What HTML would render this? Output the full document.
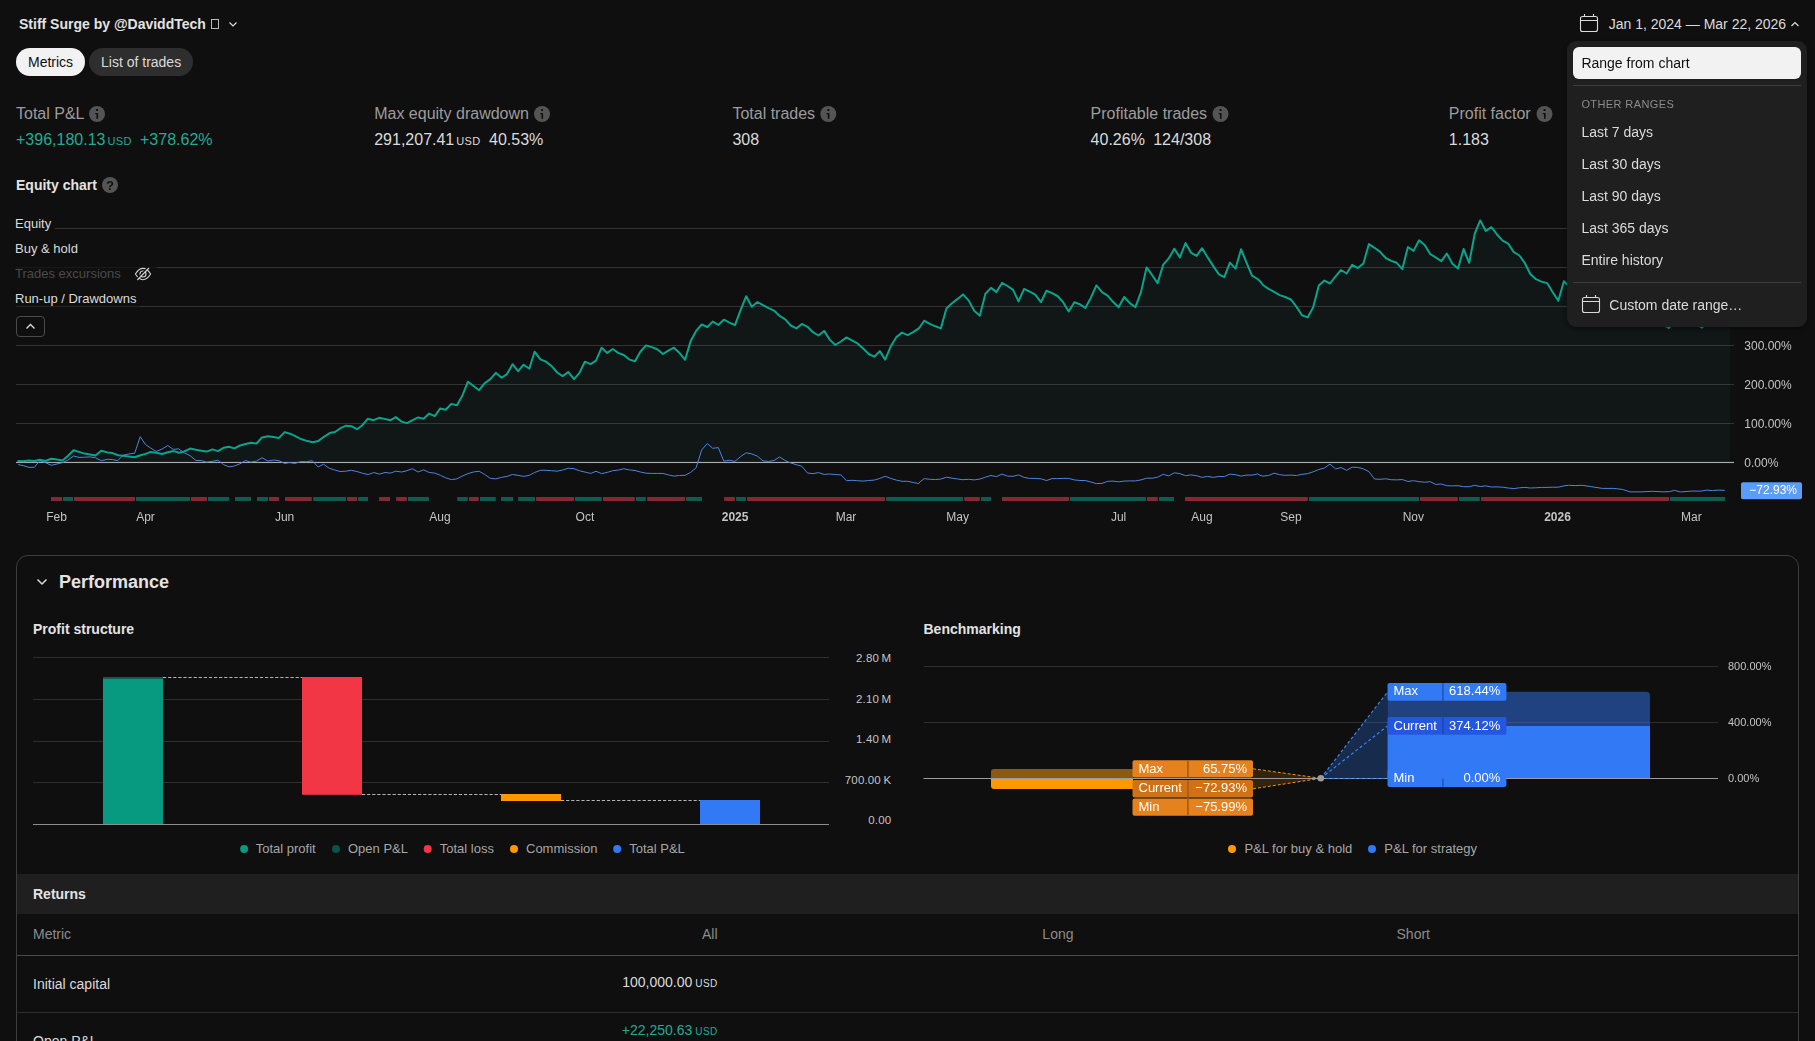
<!DOCTYPE html><html><head><meta charset="utf-8"><title>Strategy report</title><style>
html,body{margin:0;padding:0;background:#0f0f0f;}
body{width:1815px;height:1041px;position:relative;overflow:hidden;font-family:"Liberation Sans", sans-serif;color:#dbdbdb;}
.t{position:absolute;white-space:pre;line-height:normal;}
.abs{position:absolute;}
svg{position:absolute;left:0;top:0;overflow:visible}
.usd{font-size:11px;margin-left:2px;letter-spacing:0.35px}
.lay{position:absolute;left:0;top:0;width:1815px;height:1041px;}
.grayc{will-change:transform;}
</style></head><body>
<div class="lay "><div class="abs" style="left:211px;top:19px;width:6px;height:8px;border:1px solid #bdbdbd"></div><div class="abs" style="left:16px;top:48px;width:69px;height:28px;border-radius:14px;background:#f2f2f2"></div><div class="abs" style="left:89px;top:48px;width:104px;height:28px;border-radius:14px;background:#2e2e2e"></div><div class="abs" style="left:16px;top:555px;width:1781px;height:520px;border:1px solid #3d3d3d;border-radius:12px;box-sizing:content-box"></div><div class="abs" style="left:17px;top:873.5px;width:1781px;height:40px;background:#1f1f1f"></div><div class="abs" style="left:17px;top:955px;width:1781px;height:1px;background:#4a4a4a"></div><div class="abs" style="left:17px;top:1012px;width:1781px;height:1px;background:#2e2e2e"></div><svg width="1815" height="1041" viewBox="0 0 1815 1041" font-family='"Liberation Sans", sans-serif'><g><circle cx="97" cy="114" r="8" fill="#545454"/><rect x="96" y="108.9" width="2.1" height="2" rx="0.6" fill="#0f0f0f"/><rect x="96.45" y="113.1" width="1.65" height="5.7" fill="#0f0f0f"/><rect x="95.1" y="113.1" width="1.6" height="1" fill="#0f0f0f"/></g><g><circle cx="542" cy="114" r="8" fill="#545454"/><rect x="541" y="108.9" width="2.1" height="2" rx="0.6" fill="#0f0f0f"/><rect x="541.45" y="113.1" width="1.65" height="5.7" fill="#0f0f0f"/><rect x="540.1" y="113.1" width="1.6" height="1" fill="#0f0f0f"/></g><g><circle cx="828.3" cy="114" r="8" fill="#545454"/><rect x="827.3" y="108.9" width="2.1" height="2" rx="0.6" fill="#0f0f0f"/><rect x="827.75" y="113.1" width="1.65" height="5.7" fill="#0f0f0f"/><rect x="826.4" y="113.1" width="1.6" height="1" fill="#0f0f0f"/></g><g><circle cx="1220.5" cy="114" r="8" fill="#545454"/><rect x="1219.5" y="108.9" width="2.1" height="2" rx="0.6" fill="#0f0f0f"/><rect x="1219.95" y="113.1" width="1.65" height="5.7" fill="#0f0f0f"/><rect x="1218.6" y="113.1" width="1.6" height="1" fill="#0f0f0f"/></g><g><circle cx="1544.5" cy="114" r="8" fill="#545454"/><rect x="1543.5" y="108.9" width="2.1" height="2" rx="0.6" fill="#0f0f0f"/><rect x="1543.95" y="113.1" width="1.65" height="5.7" fill="#0f0f0f"/><rect x="1542.6" y="113.1" width="1.6" height="1" fill="#0f0f0f"/></g><g><circle cx="110" cy="185" r="8" fill="#545454"/></g><path d="M229.5 22.5 L233 26 L236.5 22.5" fill="none" stroke="#dbdbdb" stroke-width="1.2"/><path d="M1791.5 26 L1795 22.5 L1798.5 26" fill="none" stroke="#dbdbdb" stroke-width="1.2"/><g fill="none" stroke="#dbdbdb" stroke-width="1.1"><rect x="1580.5" y="16.5" width="17" height="15" rx="2"/><path d="M1580.5 20.5H1597.5M1584.5 14V16.5M1593.5 14V16.5"/></g><rect x="16" y="267" width="141" height="1" fill="#191919"/><rect x="16" y="306" width="124" height="1" fill="#222222"/><rect x="16.5" y="316.5" width="28" height="20" rx="3.5" fill="#0f0f0f" stroke="#4a4a4a"/><path d="M26.5 328.5 L30.5 324.5 L34.5 328.5" fill="none" stroke="#dbdbdb" stroke-width="1.3"/><g fill="none" stroke="#cfcfcf" stroke-width="1.15"><path d="M135.4 274 C138 269.8 140.5 268.3 143 268.3 C145.5 268.3 148 269.8 150.6 274 C148 278.2 145.5 279.7 143 279.7 C140.5 279.7 138 278.2 135.4 274Z"/><circle cx="143" cy="274" r="3"/><path d="M136.4 279.3 L148.2 267.3" stroke="#0f0f0f" stroke-width="1.3"/><path d="M137.3 280 L149 268"/></g><path d="M37.5 579.5 L42 584 L46.5 579.5" fill="none" stroke="#dbdbdb" stroke-width="1.5"/><rect x="33" y="657" width="796" height="1" fill="#2e2e2e"/><rect x="33" y="699" width="796" height="1" fill="#2e2e2e"/><rect x="33" y="741" width="796" height="1" fill="#2e2e2e"/><rect x="33" y="782" width="796" height="1" fill="#2e2e2e"/><rect x="33" y="824" width="796" height="1" fill="#8c8c8c"/><rect x="103" y="677" width="60" height="147" fill="#089981"/><rect x="103" y="677" width="60" height="2" fill="#0d5e4f"/><rect x="302" y="677" width="60" height="117.8" fill="#f23645"/><rect x="501" y="794" width="60" height="7" fill="#ff9800"/><rect x="700" y="800" width="60" height="24" fill="#3179f5"/><path d="M163 677.5H302" stroke="#b4b4b4" stroke-width="1" stroke-dasharray="3.2 1.9"/><path d="M362 794.5H501" stroke="#b4b4b4" stroke-width="1" stroke-dasharray="3.2 1.9"/><path d="M561 800.5H700" stroke="#b4b4b4" stroke-width="1" stroke-dasharray="3.2 1.9"/><circle cx="244.1" cy="849" r="4" fill="#089981"/><circle cx="336" cy="849" r="4" fill="#0a5347"/><circle cx="427.7" cy="849" r="4" fill="#f23645"/><circle cx="514" cy="849" r="4" fill="#ff9800"/><circle cx="617.2" cy="849" r="4" fill="#3179f5"/><circle cx="1232" cy="849" r="4" fill="#ff9800"/><circle cx="1372" cy="849" r="4" fill="#3179f5"/></svg><div class="t" style="left:19px;top:16px;font-size:14px;color:#e3e3e3;font-weight:700;">Stiff Surge by @DaviddTech</div><div class="t" style="left:28px;top:54px;font-size:14px;color:#0f0f0f;font-weight:400;">Metrics</div><div class="t" style="left:101px;top:54px;font-size:14px;color:#dbdbdb;font-weight:400;">List of trades</div><div class="t" style="left:1608.7px;top:16px;font-size:14px;color:#dbdbdb;font-weight:400;">Jan 1, 2024 — Mar 22, 2026</div><div class="t" style="left:16px;top:105px;font-size:16px;color:#9c9c9c;font-weight:400;">Total P&amp;L</div><div class="t" style="left:374.2px;top:105px;font-size:16px;color:#9c9c9c;font-weight:400;">Max equity drawdown</div><div class="t" style="left:732.4px;top:105px;font-size:16px;color:#9c9c9c;font-weight:400;">Total trades</div><div class="t" style="left:1090.6px;top:105px;font-size:16px;color:#9c9c9c;font-weight:400;">Profitable trades</div><div class="t" style="left:1448.8px;top:105px;font-size:16px;color:#9c9c9c;font-weight:400;">Profit factor</div><div class="t" style="left:16px;top:131px;font-size:16px;color:#22ab94;font-weight:400;">+396,180.13<span class="usd">USD</span></div><div class="t" style="left:140px;top:131px;font-size:16px;color:#22ab94;font-weight:400;">+378.62%</div><div class="t" style="left:374.2px;top:131px;font-size:16px;color:#dbdbdb;font-weight:400;">291,207.41<span class="usd">USD</span></div><div class="t" style="left:489px;top:131px;font-size:16px;color:#dbdbdb;font-weight:400;">40.53%</div><div class="t" style="left:732.4px;top:131px;font-size:16px;color:#dbdbdb;font-weight:400;">308</div><div class="t" style="left:1090.6px;top:131px;font-size:16px;color:#dbdbdb;font-weight:400;">40.26%</div><div class="t" style="left:1153.2px;top:131px;font-size:16px;color:#dbdbdb;font-weight:400;">124/308</div><div class="t" style="left:1448.8px;top:131px;font-size:16px;color:#dbdbdb;font-weight:400;">1.183</div><div class="t" style="left:16px;top:177px;font-size:14px;color:#e3e3e3;font-weight:700;">Equity chart</div><div class="t" style="left:15px;top:216px;font-size:13px;color:#dbdbdb;font-weight:400;">Equity</div><div class="t" style="left:15px;top:241px;font-size:13px;color:#dbdbdb;font-weight:400;">Buy &amp; hold</div><div class="t" style="left:15px;top:266px;font-size:13px;color:#4a4a4a;font-weight:400;">Trades excursions</div><div class="t" style="left:15px;top:291px;font-size:13px;color:#dbdbdb;font-weight:400;">Run-up / Drawdowns</div><div class="t" style="right:923.7px;top:652px;font-size:11.5px;color:#c4c4c4;font-weight:400;letter-spacing:0.15px;">2.80<span style="margin-left:2.6px">M</span></div><div class="t" style="right:923.7px;top:693px;font-size:11.5px;color:#c4c4c4;font-weight:400;letter-spacing:0.15px;">2.10<span style="margin-left:2.6px">M</span></div><div class="t" style="right:923.7px;top:733px;font-size:11.5px;color:#c4c4c4;font-weight:400;letter-spacing:0.15px;">1.40<span style="margin-left:2.6px">M</span></div><div class="t" style="right:923.7px;top:774px;font-size:11.5px;color:#c4c4c4;font-weight:400;letter-spacing:0.15px;">700.00<span style="margin-left:2.6px">K</span></div><div class="t" style="right:923.7px;top:814px;font-size:11.5px;color:#c4c4c4;font-weight:400;letter-spacing:0.15px;">0.00</div><div class="t" style="left:255.7px;top:841px;font-size:13px;color:#a6a6a6;font-weight:400;">Total profit</div><div class="t" style="left:348px;top:841px;font-size:13px;color:#a6a6a6;font-weight:400;">Open P&amp;L</div><div class="t" style="left:439.7px;top:841px;font-size:13px;color:#a6a6a6;font-weight:400;">Total loss</div><div class="t" style="left:526px;top:841px;font-size:13px;color:#a6a6a6;font-weight:400;">Commission</div><div class="t" style="left:629.2px;top:841px;font-size:13px;color:#a6a6a6;font-weight:400;">Total P&amp;L</div><div class="t" style="left:59px;top:572px;font-size:18px;color:#e3e3e3;font-weight:700;">Performance</div><div class="t" style="left:33px;top:621px;font-size:14px;color:#e3e3e3;font-weight:700;">Profit structure</div><div class="t" style="left:923.5px;top:621px;font-size:14px;color:#e3e3e3;font-weight:700;">Benchmarking</div><div class="t" style="left:33px;top:886px;font-size:14px;color:#e3e3e3;font-weight:700;">Returns</div><div class="t" style="left:33px;top:926px;font-size:14px;color:#8c8c8c;font-weight:400;">Metric</div><div class="t" style="right:1097.5px;top:926px;font-size:14px;color:#8c8c8c;font-weight:400;">All</div><div class="t" style="right:741.5px;top:926px;font-size:14px;color:#8c8c8c;font-weight:400;">Long</div><div class="t" style="right:385px;top:926px;font-size:14px;color:#8c8c8c;font-weight:400;">Short</div><div class="t" style="left:33px;top:976px;font-size:14px;color:#dbdbdb;font-weight:400;">Initial capital</div><div class="t" style="right:1097.5px;top:974px;font-size:14px;color:#dbdbdb;font-weight:400;">100,000.00<span class="usd" style="font-size:10px;margin-left:3px">USD</span></div><div class="t" style="left:33px;top:1033px;font-size:14px;color:#dbdbdb;font-weight:400;">Open P&amp;L</div><div class="t" style="right:1097.5px;top:1022px;font-size:14px;color:#22ab94;font-weight:400;">+22,250.63<span class="usd" style="font-size:10px;margin-left:3px">USD</span></div><div class="t" style="left:1244.4px;top:841px;font-size:13px;color:#a6a6a6;font-weight:400;">P&amp;L for buy &amp; hold</div><div class="t" style="left:1384.3px;top:841px;font-size:13px;color:#a6a6a6;font-weight:400;">P&amp;L for strategy</div></div>
<div class="lay grayc"><svg width="1815" height="1041" viewBox="0 0 1815 1041" font-family='"Liberation Sans", sans-serif'><text x="110" y="190.2" text-anchor="middle" font-size="12.5" font-weight="700" fill="#0f0f0f">?</text><rect x="55" y="228" width="1679" height="1" fill="#333333"/><rect x="157" y="267" width="1577" height="1" fill="#333333"/><rect x="140" y="306" width="1594" height="1" fill="#333333"/><rect x="16" y="345" width="1718" height="1" fill="#333333"/><rect x="16" y="384" width="1718" height="1" fill="#333333"/><rect x="16" y="423" width="1718" height="1" fill="#333333"/><path d="M18.2,462 L18.2,461.0 L23.1,461.3 L28.9,460.5 L34.7,461.0 L39.7,459.7 L45.5,461.0 L51.2,458.8 L57.0,459.5 L62.5,460.5 L67.8,456.0 L73.6,450.2 L79.0,451.9 L84.6,453.6 L90.1,454.4 L95.5,455.4 L101.2,450.7 L107.4,452.4 L112.4,453.1 L118.2,455.2 L123.1,455.7 L128.9,456.4 L134.7,457.2 L140.5,455.2 L145.5,453.9 L150.7,451.9 L156.2,452.7 L162.0,454.0 L167.8,452.2 L173.6,451.1 L179.3,452.7 L184.3,451.4 L190.1,448.6 L195.9,449.8 L201.3,450.7 L206.6,451.6 L212.4,449.4 L217.9,451.1 L223.5,447.8 L228.9,446.8 L234.4,448.4 L240.0,445.5 L245.5,444.0 L250.9,442.8 L256.5,443.5 L262.0,437.4 L267.8,436.2 L273.6,437.0 L279.0,437.9 L284.6,432.1 L290.1,433.7 L295.8,436.4 L301.6,439.3 L307.4,441.1 L312.8,442.2 L318.1,441.1 L323.9,436.8 L329.7,433.1 L335.0,432.0 L340.4,428.2 L346.2,425.7 L351.5,426.2 L356.9,429.2 L362.4,425.2 L367.7,418.8 L373.5,420.2 L379.3,417.8 L385.0,419.1 L390.5,420.2 L395.8,417.1 L401.6,421.6 L407.0,423.1 L412.6,420.1 L418.1,417.4 L423.6,418.8 L429.2,413.6 L434.8,416.1 L440.1,408.5 L445.7,409.7 L451.3,403.9 L456.9,405.2 L462.2,396.0 L467.9,381.7 L473.5,386.0 L479.1,390.2 L484.7,383.2 L490.3,379.1 L495.8,372.8 L501.6,377.8 L507.0,374.1 L512.5,364.2 L518.1,371.2 L523.6,364.7 L529.3,368.7 L534.6,351.7 L540.4,359.3 L545.9,361.6 L551.7,366.2 L557.1,372.5 L562.7,376.1 L568.2,372.0 L574.0,379.1 L579.3,373.1 L584.8,361.7 L590.6,364.1 L596.0,360.6 L601.6,347.7 L607.2,352.9 L612.8,349.0 L618.2,352.9 L623.8,355.0 L629.4,359.6 L635.0,361.2 L640.5,351.5 L646.1,345.4 L651.7,347.1 L657.3,349.2 L662.9,354.0 L668.3,350.6 L673.9,347.7 L679.5,352.9 L685.1,359.8 L690.7,340.9 L696.1,330.9 L701.7,324.5 L707.3,327.0 L712.7,321.6 L718.3,324.9 L723.8,319.7 L729.4,322.6 L735.0,325.1 L740.6,310.1 L746.2,296.2 L751.8,306.8 L757.4,302.0 L763.0,305.2 L768.6,308.1 L774.0,310.6 L779.6,315.9 L785.2,319.3 L790.8,325.5 L796.4,328.4 L801.9,324.0 L807.5,326.8 L812.9,332.2 L818.5,335.5 L824.1,330.9 L829.7,339.6 L835.3,345.0 L840.9,341.5 L846.5,337.4 L851.9,340.3 L857.5,343.4 L863.1,348.6 L868.7,354.0 L874.3,356.7 L879.8,351.1 L885.2,359.6 L890.8,346.3 L896.4,337.1 L902.0,332.6 L907.6,335.1 L913.2,332.2 L918.8,328.4 L920.0,326.8 L924.2,320.7 L929.8,323.9 L935.4,326.3 L940.8,328.4 L946.4,308.5 L952.0,303.3 L957.6,298.9 L963.0,294.4 L968.6,300.4 L974.2,310.8 L979.8,315.7 L985.4,293.7 L991.0,287.9 L996.4,292.1 L1002.0,282.9 L1007.5,286.0 L1013.1,289.8 L1018.5,301.4 L1024.1,288.9 L1029.7,291.7 L1035.3,294.6 L1040.9,302.2 L1046.5,290.8 L1052.1,293.1 L1057.5,296.0 L1063.1,302.2 L1068.7,311.4 L1074.3,302.2 L1079.9,304.3 L1085.3,307.9 L1090.8,297.9 L1096.4,285.4 L1102.0,292.1 L1107.6,295.6 L1113.0,301.8 L1118.6,307.2 L1124.2,297.0 L1129.8,303.1 L1135.4,307.2 L1141.0,292.1 L1146.6,267.4 L1152.2,275.2 L1157.6,283.1 L1163.2,264.7 L1168.7,258.4 L1174.3,248.7 L1179.9,257.4 L1185.5,243.0 L1190.9,252.6 L1196.5,255.9 L1202.1,248.2 L1207.7,257.4 L1213.3,266.1 L1218.9,274.4 L1224.3,277.1 L1229.9,262.6 L1235.5,268.6 L1241.1,249.3 L1246.5,262.6 L1252.0,275.7 L1257.6,279.0 L1260.0,281.2 L1262.9,285.0 L1268.5,288.9 L1274.1,291.8 L1279.7,295.1 L1285.3,297.0 L1290.9,299.5 L1296.4,306.6 L1302.0,315.3 L1307.6,317.4 L1313.2,307.2 L1318.8,285.6 L1324.4,280.6 L1330.0,283.5 L1335.6,276.3 L1341.0,270.0 L1346.6,273.5 L1352.2,264.8 L1357.8,268.1 L1363.4,263.4 L1368.9,244.1 L1374.5,247.8 L1380.1,251.9 L1385.7,258.0 L1391.3,260.9 L1396.7,262.8 L1402.3,269.2 L1407.9,247.0 L1413.5,250.9 L1419.1,240.3 L1424.7,244.9 L1430.3,254.2 L1435.7,257.4 L1441.3,261.1 L1446.8,253.6 L1452.4,263.8 L1458.0,268.6 L1463.6,249.0 L1469.2,262.8 L1474.8,233.5 L1480.2,220.4 L1485.8,231.0 L1491.4,227.2 L1497.0,234.5 L1502.6,240.7 L1508.2,243.6 L1513.8,252.2 L1519.4,255.5 L1524.9,263.2 L1530.3,274.0 L1535.9,279.2 L1541.5,281.6 L1547.1,283.1 L1552.7,292.2 L1558.3,300.8 L1563.9,281.2 L1567.6,285.0 L1573,296 L1579,305 L1584,312 L1590,320 L1596,316 L1601,322 L1607,323 L1612,318 L1618,310 L1624,315 L1629,322 L1635,316 L1640,308 L1646,312 L1651,320 L1657,324 L1662,324 L1668.7,328 L1674,322 L1679,318 L1685,321 L1690,324 L1696,324 L1702,327.6 L1707,322 L1713,318 L1718,320 L1724.5,316 L1730,316 L1730,462 Z" fill="rgba(34,171,148,0.055)"/><rect x="16" y="461.9" width="1718" height="1.15" fill="#ababab"/><polyline points="18.2,461.0 23.1,461.3 28.9,460.5 34.7,461.0 39.7,459.7 45.5,461.0 51.2,458.8 57.0,459.5 62.5,460.5 67.8,456.0 73.6,450.2 79.0,451.9 84.6,453.6 90.1,454.4 95.5,455.4 101.2,450.7 107.4,452.4 112.4,453.1 118.2,455.2 123.1,455.7 128.9,456.4 134.7,457.2 140.5,455.2 145.5,453.9 150.7,451.9 156.2,452.7 162.0,454.0 167.8,452.2 173.6,451.1 179.3,452.7 184.3,451.4 190.1,448.6 195.9,449.8 201.3,450.7 206.6,451.6 212.4,449.4 217.9,451.1 223.5,447.8 228.9,446.8 234.4,448.4 240.0,445.5 245.5,444.0 250.9,442.8 256.5,443.5 262.0,437.4 267.8,436.2 273.6,437.0 279.0,437.9 284.6,432.1 290.1,433.7 295.8,436.4 301.6,439.3 307.4,441.1 312.8,442.2 318.1,441.1 323.9,436.8 329.7,433.1 335.0,432.0 340.4,428.2 346.2,425.7 351.5,426.2 356.9,429.2 362.4,425.2 367.7,418.8 373.5,420.2 379.3,417.8 385.0,419.1 390.5,420.2 395.8,417.1 401.6,421.6 407.0,423.1 412.6,420.1 418.1,417.4 423.6,418.8 429.2,413.6 434.8,416.1 440.1,408.5 445.7,409.7 451.3,403.9 456.9,405.2 462.2,396.0 467.9,381.7 473.5,386.0 479.1,390.2 484.7,383.2 490.3,379.1 495.8,372.8 501.6,377.8 507.0,374.1 512.5,364.2 518.1,371.2 523.6,364.7 529.3,368.7 534.6,351.7 540.4,359.3 545.9,361.6 551.7,366.2 557.1,372.5 562.7,376.1 568.2,372.0 574.0,379.1 579.3,373.1 584.8,361.7 590.6,364.1 596.0,360.6 601.6,347.7 607.2,352.9 612.8,349.0 618.2,352.9 623.8,355.0 629.4,359.6 635.0,361.2 640.5,351.5 646.1,345.4 651.7,347.1 657.3,349.2 662.9,354.0 668.3,350.6 673.9,347.7 679.5,352.9 685.1,359.8 690.7,340.9 696.1,330.9 701.7,324.5 707.3,327.0 712.7,321.6 718.3,324.9 723.8,319.7 729.4,322.6 735.0,325.1 740.6,310.1 746.2,296.2 751.8,306.8 757.4,302.0 763.0,305.2 768.6,308.1 774.0,310.6 779.6,315.9 785.2,319.3 790.8,325.5 796.4,328.4 801.9,324.0 807.5,326.8 812.9,332.2 818.5,335.5 824.1,330.9 829.7,339.6 835.3,345.0 840.9,341.5 846.5,337.4 851.9,340.3 857.5,343.4 863.1,348.6 868.7,354.0 874.3,356.7 879.8,351.1 885.2,359.6 890.8,346.3 896.4,337.1 902.0,332.6 907.6,335.1 913.2,332.2 918.8,328.4 920.0,326.8 924.2,320.7 929.8,323.9 935.4,326.3 940.8,328.4 946.4,308.5 952.0,303.3 957.6,298.9 963.0,294.4 968.6,300.4 974.2,310.8 979.8,315.7 985.4,293.7 991.0,287.9 996.4,292.1 1002.0,282.9 1007.5,286.0 1013.1,289.8 1018.5,301.4 1024.1,288.9 1029.7,291.7 1035.3,294.6 1040.9,302.2 1046.5,290.8 1052.1,293.1 1057.5,296.0 1063.1,302.2 1068.7,311.4 1074.3,302.2 1079.9,304.3 1085.3,307.9 1090.8,297.9 1096.4,285.4 1102.0,292.1 1107.6,295.6 1113.0,301.8 1118.6,307.2 1124.2,297.0 1129.8,303.1 1135.4,307.2 1141.0,292.1 1146.6,267.4 1152.2,275.2 1157.6,283.1 1163.2,264.7 1168.7,258.4 1174.3,248.7 1179.9,257.4 1185.5,243.0 1190.9,252.6 1196.5,255.9 1202.1,248.2 1207.7,257.4 1213.3,266.1 1218.9,274.4 1224.3,277.1 1229.9,262.6 1235.5,268.6 1241.1,249.3 1246.5,262.6 1252.0,275.7 1257.6,279.0 1260.0,281.2 1262.9,285.0 1268.5,288.9 1274.1,291.8 1279.7,295.1 1285.3,297.0 1290.9,299.5 1296.4,306.6 1302.0,315.3 1307.6,317.4 1313.2,307.2 1318.8,285.6 1324.4,280.6 1330.0,283.5 1335.6,276.3 1341.0,270.0 1346.6,273.5 1352.2,264.8 1357.8,268.1 1363.4,263.4 1368.9,244.1 1374.5,247.8 1380.1,251.9 1385.7,258.0 1391.3,260.9 1396.7,262.8 1402.3,269.2 1407.9,247.0 1413.5,250.9 1419.1,240.3 1424.7,244.9 1430.3,254.2 1435.7,257.4 1441.3,261.1 1446.8,253.6 1452.4,263.8 1458.0,268.6 1463.6,249.0 1469.2,262.8 1474.8,233.5 1480.2,220.4 1485.8,231.0 1491.4,227.2 1497.0,234.5 1502.6,240.7 1508.2,243.6 1513.8,252.2 1519.4,255.5 1524.9,263.2 1530.3,274.0 1535.9,279.2 1541.5,281.6 1547.1,283.1 1552.7,292.2 1558.3,300.8 1563.9,281.2 1567.6,285.0 1573,296 1579,305 1584,312 1590,320 1596,316 1601,322 1607,323 1612,318 1618,310 1624,315 1629,322 1635,316 1640,308 1646,312 1651,320 1657,324 1662,324 1668.7,328 1674,322 1679,318 1685,321 1690,324 1696,324 1702,327.6 1707,322 1713,318 1718,320 1724.5,316" fill="none" stroke="#08a58c" stroke-width="2" stroke-linejoin="round" stroke-linecap="round"/><polyline points="18.2,464.6 23.1,465.6 28.9,467.3 34.4,467.3 39.7,460.7 45.5,462.6 51.2,465.3 57.0,464.0 62.5,462.6 67.8,460.2 73.6,456.0 79.0,457.4 84.6,457.2 90.1,456.9 95.5,457.7 101.2,460.7 107.4,459.3 112.4,459.5 117.7,460.7 123.1,455.2 128.9,454.0 134.7,453.2 140.2,436.7 145.5,444.5 150.7,448.1 156.2,451.4 162.0,449.1 167.8,445.5 173.2,449.4 178.5,448.8 184.3,452.7 190.1,455.7 195.9,460.5 201.3,460.5 206.6,462.1 212.4,461.3 217.9,460.2 223.5,464.6 228.9,466.8 234.4,466.0 240.0,463.8 245.5,460.5 250.9,462.1 256.5,461.0 262.0,457.7 267.8,461.0 273.6,460.0 279.0,460.7 284.6,463.5 289.3,462.6 295.0,463.4 300.7,461.6 306.5,461.7 312.3,460.7 318.1,467.0 323.4,464.2 329.2,468.2 334.6,470.0 340.1,471.5 345.7,471.2 351.2,470.3 356.9,471.5 362.7,473.3 368.2,474.6 373.8,472.5 379.3,474.1 385.0,472.5 390.5,473.1 395.8,471.2 401.6,472.0 407.0,470.7 412.3,468.7 418.1,472.0 423.6,469.8 429.2,472.5 434.8,473.1 440.4,475.3 445.7,477.8 451.3,479.6 456.9,478.9 462.2,476.1 467.9,473.6 473.5,472.0 479.1,471.2 484.7,474.5 490.3,478.3 495.8,478.9 501.6,477.3 507.0,476.4 512.5,474.5 518.1,475.3 523.6,476.4 529.3,475.3 534.6,472.5 540.4,470.3 545.9,470.3 551.7,470.7 557.1,471.2 562.7,470.0 568.2,468.2 574.0,468.7 579.3,470.7 584.8,472.0 590.6,473.4 596.0,471.3 601.6,473.6 607.2,472.4 612.8,470.7 618.2,470.1 623.8,468.8 629.4,469.9 635.0,470.5 640.5,472.0 646.1,473.2 651.7,473.4 657.3,473.4 662.9,473.4 668.3,474.9 673.9,476.1 679.5,475.5 685.1,475.3 690.7,472.4 696.1,467.8 701.7,449.9 707.3,443.5 712.7,448.3 718.3,447.6 723.8,461.1 729.4,460.3 735.0,461.4 740.6,456.6 746.2,452.8 751.8,453.9 757.4,456.2 763.0,460.9 768.6,461.4 774.0,460.5 779.6,457.0 785.2,460.5 790.8,463.0 796.4,464.7 801.9,466.3 807.5,473.0 812.9,473.6 818.5,472.6 824.1,474.4 829.7,474.0 835.3,474.5 840.9,474.9 846.5,480.7 851.9,480.3 857.5,480.7 863.1,481.1 868.7,480.5 874.3,480.1 879.8,478.4 885.2,476.3 890.8,478.4 896.4,480.1 902.0,481.3 907.6,481.3 913.2,482.5 918.8,483.6 920.0,481.8 924.2,478.6 929.8,479.3 935.4,479.5 940.8,479.1 946.4,477.2 952.0,478.2 957.6,479.0 963.0,479.7 968.6,479.3 974.2,479.9 979.8,479.1 985.4,477.2 991.0,475.5 996.4,476.6 1002.0,474.1 1007.5,476.1 1013.1,476.3 1018.5,474.9 1024.1,477.4 1029.7,478.4 1035.3,478.4 1040.9,478.8 1046.5,480.5 1052.1,478.6 1057.5,478.6 1063.1,478.4 1068.7,478.4 1074.3,479.9 1079.9,480.5 1085.3,480.5 1090.8,482.0 1096.4,483.6 1102.0,483.4 1107.6,481.3 1113.0,481.1 1118.6,481.8 1124.2,481.1 1129.8,480.9 1135.4,480.9 1141.0,479.9 1146.6,478.2 1152.2,478.2 1157.6,477.2 1163.2,474.3 1168.7,475.9 1174.3,472.8 1179.9,473.6 1185.5,475.7 1190.9,474.9 1196.5,475.7 1202.1,477.4 1207.7,476.4 1213.3,477.4 1218.9,476.4 1224.3,476.6 1229.9,474.1 1235.5,474.7 1241.1,476.1 1246.5,475.1 1252.0,475.1 1257.6,473.9 1260.0,475.3 1262.9,476.1 1268.5,475.5 1274.1,473.2 1279.7,474.7 1285.3,475.3 1290.9,475.1 1296.4,475.5 1302.0,474.3 1307.6,473.7 1313.2,471.8 1318.8,469.5 1324.4,468.0 1330.0,464.1 1335.6,468.9 1341.0,467.6 1346.6,470.3 1352.2,467.2 1357.8,467.4 1363.4,468.9 1368.9,471.6 1374.5,479.0 1380.1,479.3 1385.7,478.8 1391.3,479.7 1396.7,479.9 1402.3,479.5 1407.9,481.5 1413.5,480.7 1419.1,481.7 1424.7,482.2 1430.3,481.7 1435.7,484.4 1441.3,484.0 1446.8,485.7 1452.4,485.9 1458.0,485.7 1463.6,486.7 1469.2,486.7 1474.8,485.3 1480.2,486.5 1485.8,485.9 1491.4,487.0 1497.0,486.9 1502.6,487.2 1508.2,488.0 1513.8,488.6 1519.4,487.8 1524.9,487.4 1530.3,488.0 1535.9,487.8 1541.5,487.4 1547.1,487.4 1552.7,487.2 1558.3,487.2 1563.9,485.9 1568.6,485.3 1575.1,485.6 1582.2,485.3 1590.8,486.6 1602.3,488.4 1613.7,488.4 1622.3,489.4 1630.2,491.9 1641.0,491.9 1652.4,491.3 1663.9,491.9 1669.6,491.6 1674.6,490.4 1680.4,492.0 1691.1,491.1 1701.1,491.1 1706.9,490.1 1712.6,490.6 1718.3,490.1 1724.8,490.4" fill="none" stroke="#4a86e0" stroke-width="1" stroke-linejoin="round"/><rect x="51" y="497" width="11" height="4" fill="#872734"/><rect x="63" y="497" width="10" height="4" fill="#0c5c4f"/><rect x="74" y="497" width="61" height="4" fill="#872734"/><rect x="136" y="497" width="54" height="4" fill="#0c5c4f"/><rect x="191" y="497" width="16" height="4" fill="#872734"/><rect x="208" y="497" width="21" height="4" fill="#0c5c4f"/><rect x="235" y="497" width="16" height="4" fill="#0c5c4f"/><rect x="257" y="497" width="11" height="4" fill="#0c5c4f"/><rect x="269" y="497" width="10" height="4" fill="#872734"/><rect x="285" y="497" width="26.8" height="4" fill="#872734"/><rect x="313.2" y="497" width="32.8" height="4" fill="#0c5c4f"/><rect x="347.1" y="497" width="9.9" height="4" fill="#872734"/><rect x="358.1" y="497" width="9.9" height="4" fill="#0c5c4f"/><rect x="379.1" y="497" width="10.9" height="4" fill="#872734"/><rect x="396.1" y="497" width="10.8" height="4" fill="#872734"/><rect x="408" y="497" width="20.9" height="4" fill="#0c5c4f"/><rect x="457.2" y="497" width="10.6" height="4" fill="#0c5c4f"/><rect x="469" y="497" width="9.8" height="4" fill="#872734"/><rect x="480" y="497" width="15.8" height="4" fill="#0c5c4f"/><rect x="501" y="497" width="12" height="4" fill="#0c5c4f"/><rect x="518.1" y="497" width="16.9" height="4" fill="#0c5c4f"/><rect x="536.1" y="497" width="37.8" height="4" fill="#872734"/><rect x="575" y="497" width="26.8" height="4" fill="#0c5c4f"/><rect x="603" y="497" width="31.8" height="4" fill="#872734"/><rect x="636" y="497" width="9.8" height="4" fill="#0c5c4f"/><rect x="647.2" y="497" width="37.8" height="4" fill="#872734"/><rect x="686.1" y="497" width="15.9" height="4" fill="#0c5c4f"/><rect x="724.1" y="497" width="10.8" height="4" fill="#872734"/><rect x="736.1" y="497" width="9.8" height="4" fill="#0c5c4f"/><rect x="747.1" y="497" width="137.8" height="4" fill="#872734"/><rect x="886.1" y="497" width="76.9" height="4" fill="#0c5c4f"/><rect x="964.2" y="497" width="15.6" height="4" fill="#872734"/><rect x="981" y="497" width="10" height="4" fill="#0c5c4f"/><rect x="1002" y="497" width="67" height="4" fill="#872734"/><rect x="1070" y="497" width="76" height="4" fill="#0c5c4f"/><rect x="1147" y="497" width="10.8" height="4" fill="#872734"/><rect x="1159" y="497" width="15" height="4" fill="#0c5c4f"/><rect x="1185" y="497" width="122.8" height="4" fill="#872734"/><rect x="1309" y="497" width="110" height="4" fill="#0c5c4f"/><rect x="1420" y="497" width="37.8" height="4" fill="#872734"/><rect x="1459" y="497" width="20.8" height="4" fill="#0c5c4f"/><rect x="1481" y="497" width="188" height="4" fill="#872734"/><rect x="1670" y="497" width="55" height="4" fill="#0c5c4f"/><text x="56.5" y="521" text-anchor="middle" font-size="12" fill="#c4c4c4" >Feb</text><text x="145.5" y="521" text-anchor="middle" font-size="12" fill="#c4c4c4" >Apr</text><text x="284.6" y="521" text-anchor="middle" font-size="12" fill="#c4c4c4" >Jun</text><text x="440" y="521" text-anchor="middle" font-size="12" fill="#c4c4c4" >Aug</text><text x="584.9" y="521" text-anchor="middle" font-size="12" fill="#c4c4c4" >Oct</text><text x="735.1" y="521" text-anchor="middle" font-size="12" fill="#c4c4c4" font-weight="700">2025</text><text x="846" y="521" text-anchor="middle" font-size="12" fill="#c4c4c4" >Mar</text><text x="957.6" y="521" text-anchor="middle" font-size="12" fill="#c4c4c4" >May</text><text x="1118.6" y="521" text-anchor="middle" font-size="12" fill="#c4c4c4" >Jul</text><text x="1202" y="521" text-anchor="middle" font-size="12" fill="#c4c4c4" >Aug</text><text x="1290.9" y="521" text-anchor="middle" font-size="12" fill="#c4c4c4" >Sep</text><text x="1413.3" y="521" text-anchor="middle" font-size="12" fill="#c4c4c4" >Nov</text><text x="1557.5" y="521" text-anchor="middle" font-size="12" fill="#c4c4c4" font-weight="700">2026</text><text x="1691.4" y="521" text-anchor="middle" font-size="12" fill="#c4c4c4" >Mar</text><text x="1744.3" y="349.8" font-size="12" fill="#c4c4c4">300.00%</text><text x="1744.3" y="388.8" font-size="12" fill="#c4c4c4">200.00%</text><text x="1744.3" y="427.8" font-size="12" fill="#c4c4c4">100.00%</text><text x="1744.3" y="466.8" font-size="12" fill="#c4c4c4">0.00%</text><rect x="1741" y="482.3" width="61" height="17" rx="2" fill="#5b9cf6"/><text x="1797" y="494.1" text-anchor="end" font-size="12" fill="#ffffff">−72.93%</text></svg></div>
<div class="lay grayc"><svg width="1815" height="1041" viewBox="0 0 1815 1041" font-family='"Liberation Sans", sans-serif'><rect x="923.5" y="666" width="794.5" height="1" fill="#2e2e2e"/><rect x="923.5" y="722" width="794.5" height="1" fill="#2e2e2e"/><text x="1728" y="670.2" font-size="11" fill="#c4c4c4">800.00%</text><text x="1728" y="726.2" font-size="11" fill="#c4c4c4">400.00%</text><text x="1728" y="782.2" font-size="11" fill="#c4c4c4">0.00%</text><path d="M1133 769 H994 a3 3 0 0 0 -3 3 V778.5 H1133Z" fill="#8a5a14"/><path d="M1133 789 H994 a3 3 0 0 1 -3 -3 V778.5 H1133Z" fill="#ff9800"/><path d="M1253 768.8 L1320.8 778.3 L1253 788.8Z" fill="rgba(255,152,0,0.15)"/><path d="M1320.8 778.3 L1387.5 692 V778.3Z" fill="rgba(49,121,245,0.27)"/><path d="M1387.5 691.8 H1646 a4 4 0 0 1 4 4 V725.8 H1387.5Z" fill="#214280"/><rect x="1387.5" y="722" width="262.5" height="1" fill="#ffffff" opacity="0.08"/><rect x="1387.5" y="725.8" width="262.5" height="52.5" fill="#3179f5"/><rect x="923.5" y="778" width="794.5" height="1" fill="#9c9c9c"/><path d="M1253 768.8 L1320.8 778.3 M1253 788.8 L1320.8 778.3" stroke="#ef9712" stroke-width="1" stroke-dasharray="3 2" fill="none"/><path d="M1320.8 778.3 L1387.5 692 M1320.8 778.3 L1387.5 726 M1320.8 778.5 H1387.5" stroke="#3b82f6" stroke-width="1.2" stroke-dasharray="3 2.5" fill="none"/><circle cx="1320.8" cy="778.2" r="3.3" fill="#9c9c9c"/><rect x="1132.5" y="760.2" width="120.5" height="17.2" rx="2" fill="#e5821e"/><rect x="1187" y="760.2" width="1.8" height="17.2" fill="#a86016"/><rect x="1132.5" y="780.1" width="120.5" height="17.4" rx="2" fill="#cf7216"/><rect x="1187" y="780.1" width="1.8" height="17.4" fill="#a86016"/><rect x="1132.5" y="798.4" width="120.5" height="17.4" rx="2" fill="#e5821e"/><rect x="1187" y="798.4" width="1.8" height="17.4" fill="#a86016"/><rect x="1387.5" y="683.1" width="118.90000000000009" height="17.7" rx="2" fill="#3179f5"/><rect x="1442" y="683.1" width="1.8" height="17.7" fill="#2559bd"/><rect x="1387.5" y="717" width="118.90000000000009" height="17.7" rx="2" fill="#2457e0"/><rect x="1442" y="717" width="1.8" height="17.7" fill="#1f49b8"/><rect x="1387.5" y="769.1" width="118.90000000000009" height="17.8" rx="2" fill="#3179f5"/><rect x="1442" y="769.1" width="1.8" height="17.8" fill="#3179f5"/><rect x="1442" y="778.6" width="1.8" height="8.3" fill="#2559bd"/></svg><div class="t" style="left:1138.5px;top:761px;font-size:13px;color:#ffffff;font-weight:400;">Max</div><div class="t" style="right:568px;top:761px;font-size:13px;color:#ffffff;font-weight:400;">65.75%</div><div class="t" style="left:1138.5px;top:780px;font-size:13px;color:#ffffff;font-weight:400;">Current</div><div class="t" style="right:568px;top:780px;font-size:13px;color:#ffffff;font-weight:400;">−72.93%</div><div class="t" style="left:1138.5px;top:799px;font-size:13px;color:#ffffff;font-weight:400;">Min</div><div class="t" style="right:568px;top:799px;font-size:13px;color:#ffffff;font-weight:400;">−75.99%</div><div class="t" style="left:1393.5px;top:683px;font-size:13px;color:#ffffff;font-weight:400;">Max</div><div class="t" style="right:314.5999999999999px;top:683px;font-size:13px;color:#ffffff;font-weight:400;">618.44%</div><div class="t" style="left:1393.5px;top:718px;font-size:13px;color:#ffffff;font-weight:400;">Current</div><div class="t" style="right:314.5999999999999px;top:718px;font-size:13px;color:#ffffff;font-weight:400;">374.12%</div><div class="t" style="left:1393.5px;top:770px;font-size:13px;color:#ffffff;font-weight:400;">Min</div><div class="t" style="right:314.5999999999999px;top:770px;font-size:13px;color:#ffffff;font-weight:400;">0.00%</div></div>
<div class="lay grayc"><div class="abs" style="left:1567px;top:41px;width:240px;height:285.5px;border-radius:9px;background:#1f1f1f;box-shadow:0 2px 4px rgba(0,0,0,0.4)"></div><div class="abs" style="left:1573px;top:47px;width:228px;height:32px;border-radius:6px;background:#f2f2f2"></div><div class="abs" style="left:1573px;top:85px;width:228px;height:1px;background:#3d3d3d"></div><div class="abs" style="left:1573px;top:282px;width:228px;height:1px;background:#3d3d3d"></div><svg width="1815" height="1041" viewBox="0 0 1815 1041" font-family='"Liberation Sans", sans-serif'><g fill="none" stroke="#dbdbdb" stroke-width="1.1"><rect x="1582.5" y="297.5" width="17" height="15" rx="2"/><path d="M1582.5 301.5H1599.5M1586.5 295V297.5M1595.5 295V297.5"/></g></svg><div class="t" style="left:1581.4px;top:55px;font-size:14px;color:#0f0f0f;font-weight:400;">Range from chart</div><div class="t" style="left:1581.4px;top:98px;font-size:11px;color:#8c8c8c;font-weight:400;letter-spacing:0.4px;">OTHER RANGES</div><div class="t" style="left:1581.4px;top:124px;font-size:14px;color:#dbdbdb;font-weight:400;">Last 7 days</div><div class="t" style="left:1581.4px;top:156px;font-size:14px;color:#dbdbdb;font-weight:400;">Last 30 days</div><div class="t" style="left:1581.4px;top:188px;font-size:14px;color:#dbdbdb;font-weight:400;">Last 90 days</div><div class="t" style="left:1581.4px;top:220px;font-size:14px;color:#dbdbdb;font-weight:400;">Last 365 days</div><div class="t" style="left:1581.4px;top:252px;font-size:14px;color:#dbdbdb;font-weight:400;">Entire history</div><div class="t" style="left:1609.3px;top:297px;font-size:14px;color:#dbdbdb;font-weight:400;">Custom date range…</div></div>
</body></html>
